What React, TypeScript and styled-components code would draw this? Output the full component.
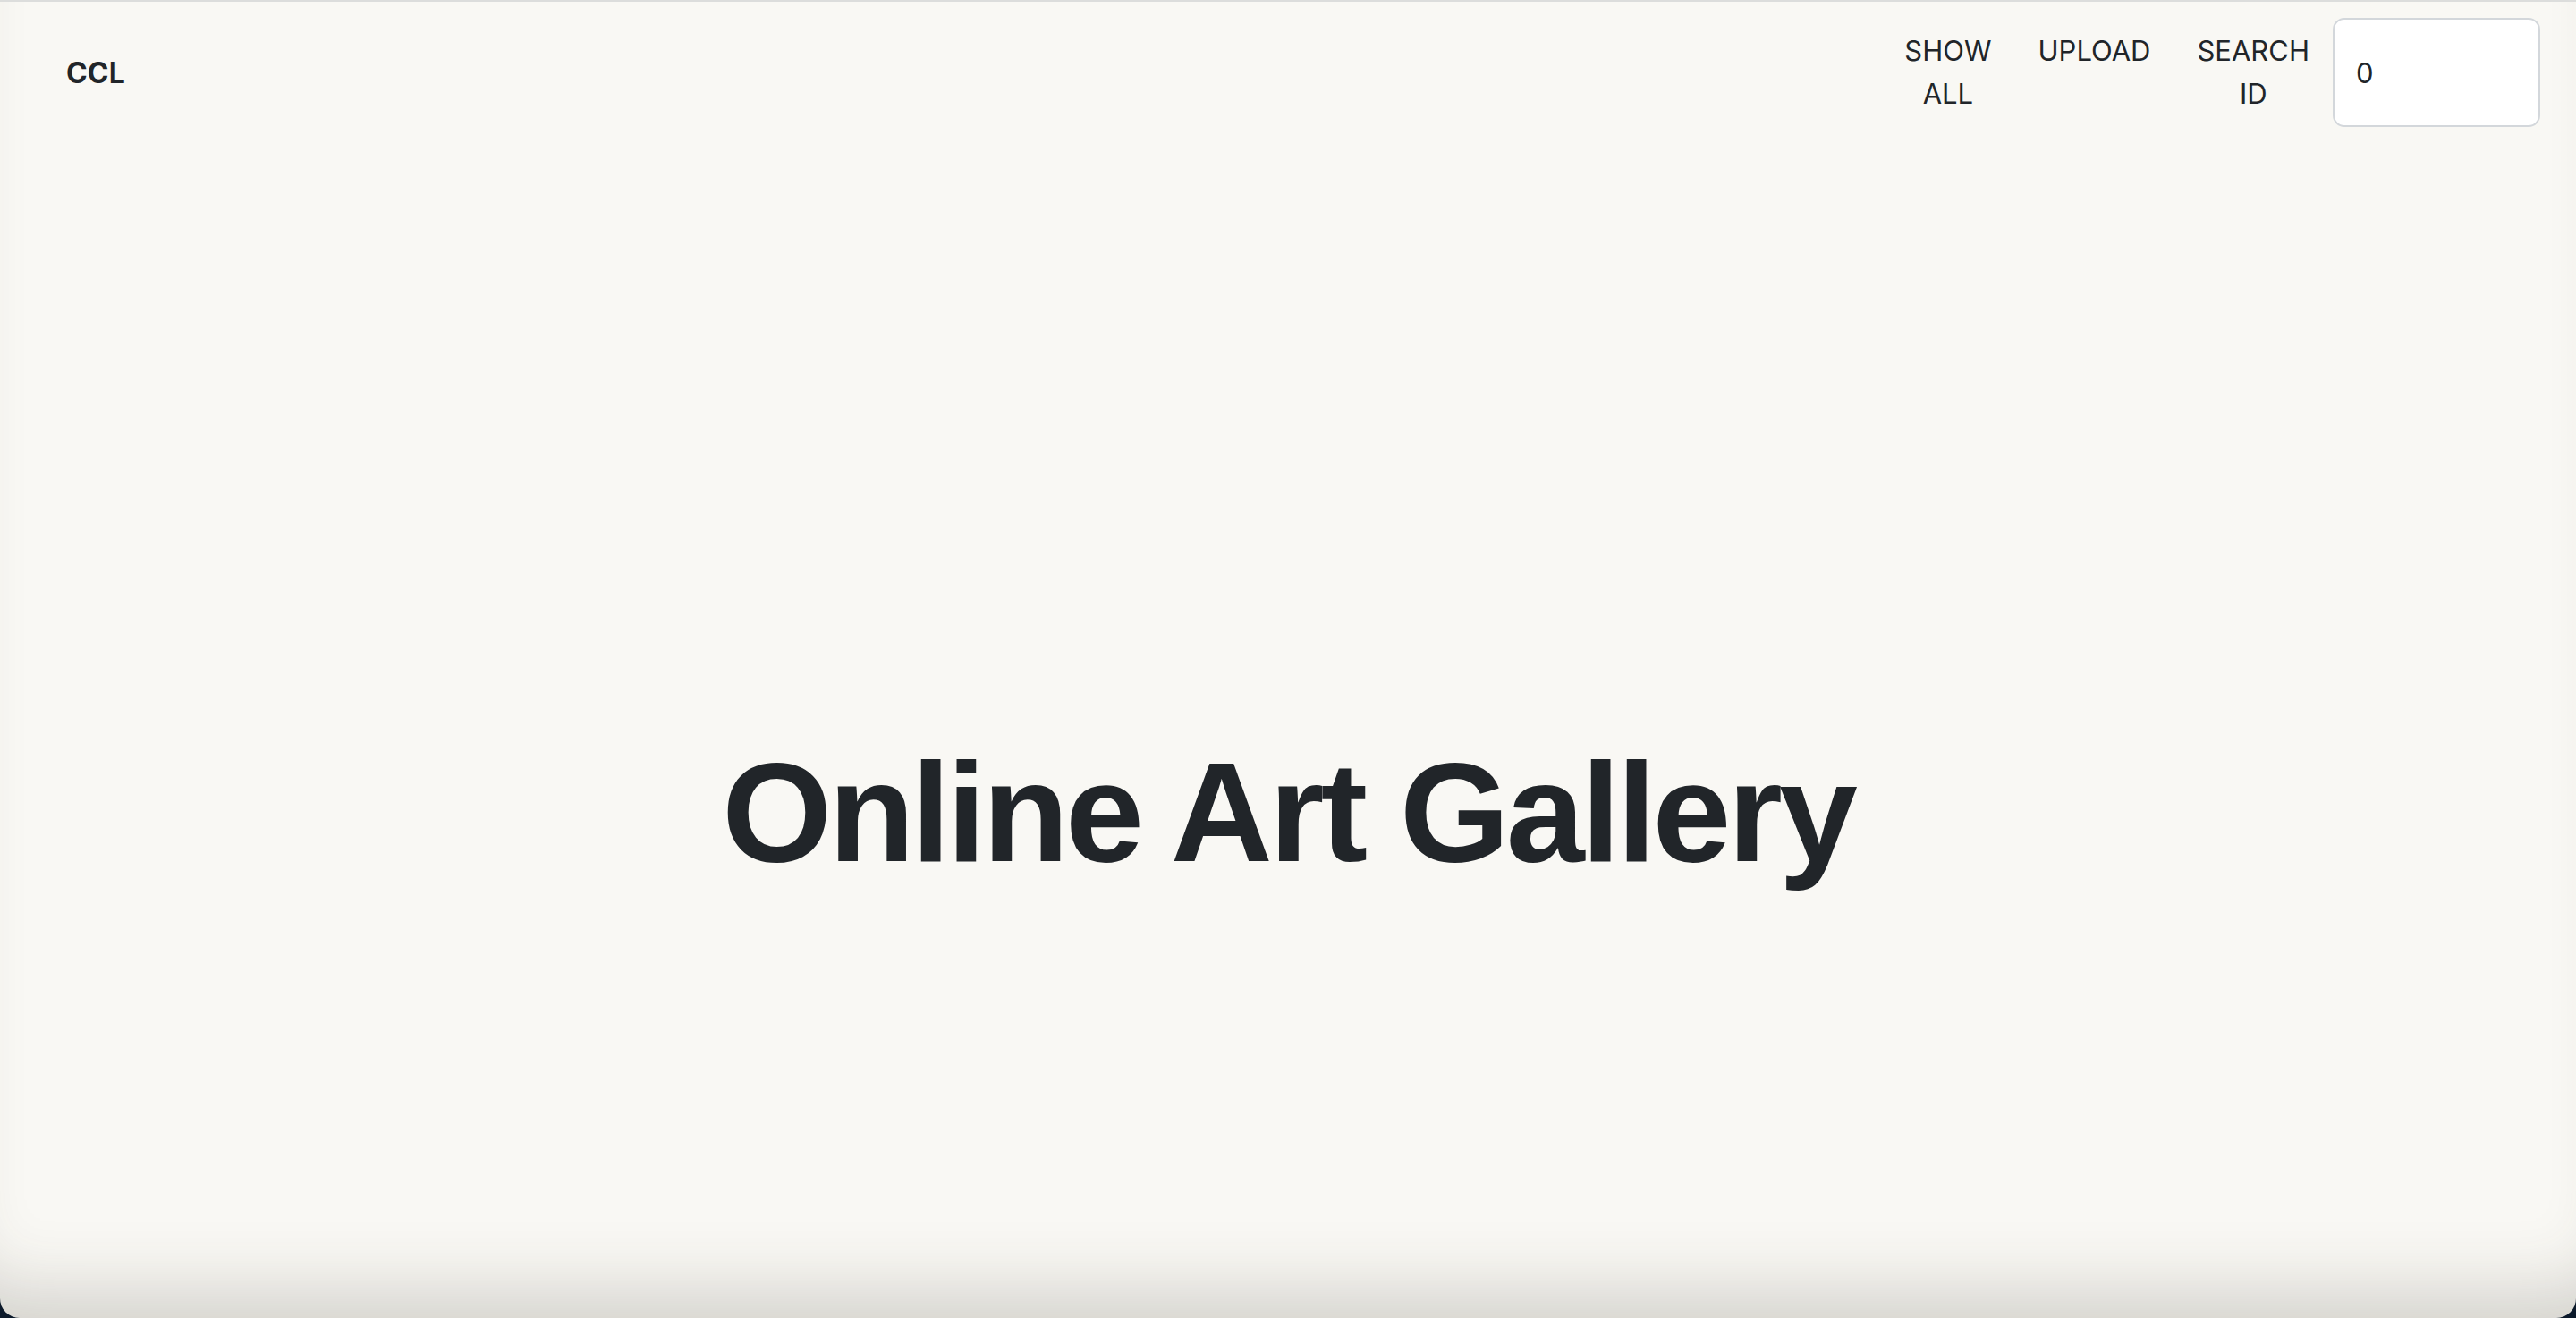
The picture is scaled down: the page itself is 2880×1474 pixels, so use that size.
import React from "react";
import styled, { createGlobalStyle } from "styled-components";

const GlobalStyle = createGlobalStyle`
  html, body {
    margin: 0;
    padding: 0;
    background: #0c1a2b;
  }
  * { box-sizing: border-box; }
`;

const Window = styled.div`
  width: 2880px;
  height: 1474px;
  display: flex;
  flex-direction: column;
  background: #f9f8f4;
  border-top: 2px solid #dcdddc;
  border-radius: 0 0 22px 22px;
  box-shadow: inset 0 -80px 80px -50px rgba(60, 55, 45, 0.2);
  overflow: hidden;
  color: #212529;
`;

const Navbar = styled.nav`
  height: 156px;
  display: flex;
  align-items: center;
  justify-content: space-between;
  padding: 0 40px 0 74px;
`;

const Brand = styled.a`
  font-family: Inter, "Liberation Sans", sans-serif;
  font-weight: 700;
  font-size: 32px;
  color: #212529;
  text-decoration: none;
  letter-spacing: 0.2px;
  margin-top: 2px;
`;

const NavRight = styled.div`
  display: flex;
  align-items: center;
`;

const NavLink = styled.a`
  width: min-content;
  min-height: 96px;
  margin-top: 2px;
  padding: 0 26px;
  font-family: Inter, "Liberation Sans", sans-serif;
  font-size: 31px;
  line-height: 48px;
  text-align: center;
  color: #212529;
  text-decoration: none;
  box-sizing: content-box;
`;

const SearchInput = styled.input`
  width: 232px;
  height: 122px;
  margin-top: 2px;
  padding: 0 24px;
  border: 2px solid #d3d7db;
  border-radius: 13px;
  background: #ffffff;
  font-family: Inter, "Liberation Sans", sans-serif;
  font-size: 31px;
  color: #212529;
  outline: none;
`;

const Hero = styled.main`
  flex: 1;
  display: flex;
  align-items: center;
  justify-content: center;
  padding-top: 184px;
`;

const Title = styled.h1`
  margin: 0;
  font-family: "Liberation Sans", Arial, sans-serif;
  font-weight: 700;
  font-size: 158px;
  line-height: 158px;
  letter-spacing: -4px;
  color: #212529;
`;

export default function App() {
  return (
    <>
      <GlobalStyle />
      <Window>
        <Navbar>
          <Brand href="#">CCL</Brand>
          <NavRight>
            <NavLink href="#">SHOW ALL</NavLink>
            <NavLink href="#">UPLOAD</NavLink>
            <NavLink href="#">SEARCH ID</NavLink>
            <SearchInput type="number" defaultValue="0" />
          </NavRight>
        </Navbar>
        <Hero>
          <Title>Online Art Gallery</Title>
        </Hero>
      </Window>
    </>
  );
}
